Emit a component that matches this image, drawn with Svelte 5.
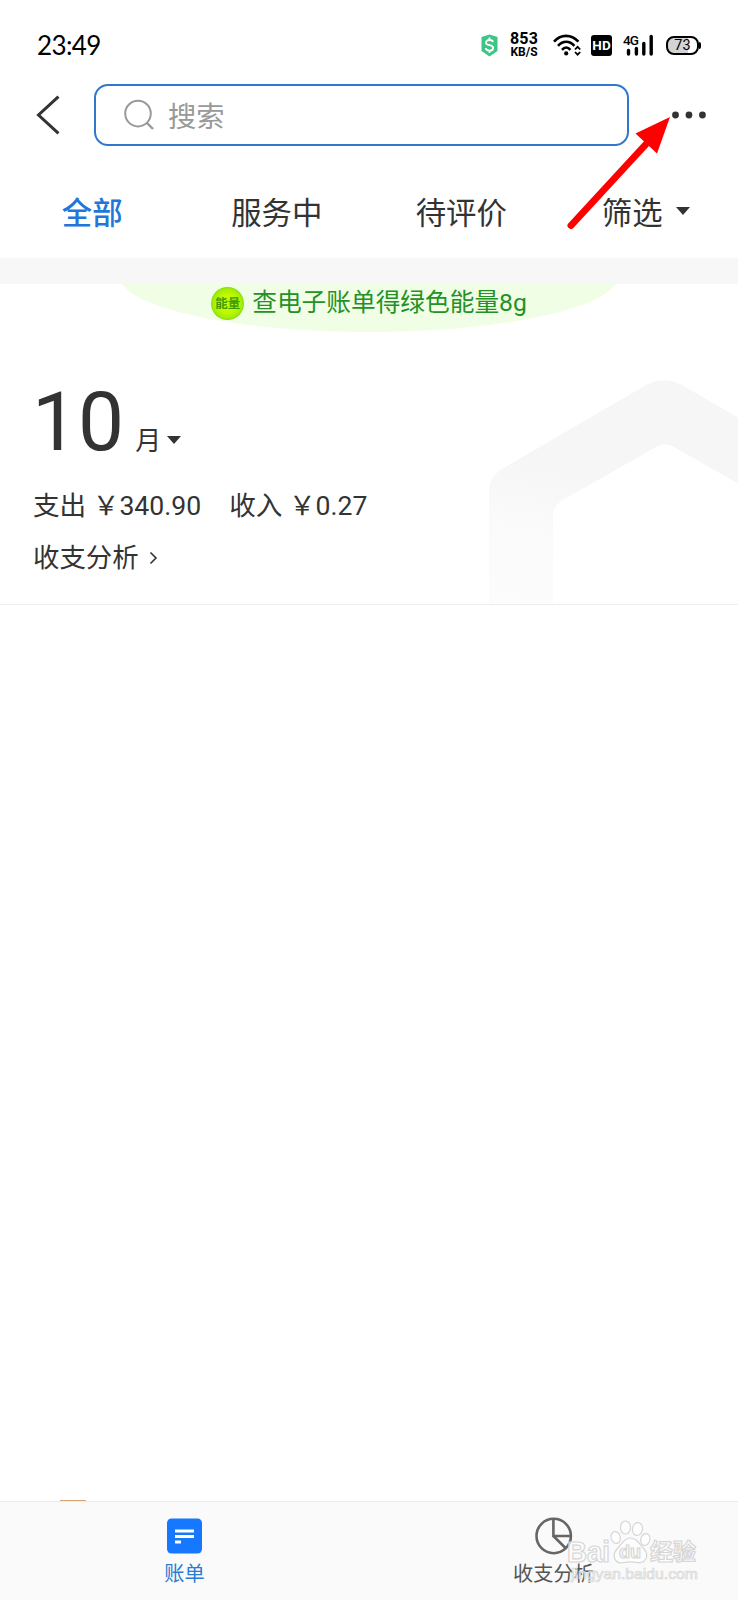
<script>
	let activeTab = 'all';
	let activeNav = 'bill';

	const tabs = [
		{ id: 'all', label: '全部' },
		{ id: 'service', label: '服务中' },
		{ id: 'review', label: '待评价' },
		{ id: 'filter', label: '筛选', dropdown: true }
	];

	const summary = [
		{ label: '支出', amount: '340.90' },
		{ label: '收入', amount: '0.27' }
	];
</script>

<div class="screen">
	<div class="status">
		<span class="time">23:49</span>
		<div class="status-icons">
			<svg class="shield" width="17" height="23" viewBox="0 0 17 23">
				<path d="M8.5 0.5L16.5 3V17L8.5 22.5L0.5 17V3Z" fill="#3cc585" />
				<path d="M12 8C11.6 6.4 10.2 6 8.5 6C6.4 6 5 7 5 8.7C5 12.2 12.2 10.2 12.2 13.9C12.2 15.6 10.7 16.6 8.5 16.6C6.5 16.6 5.1 15.8 4.7 14.1M8.5 3.5V6M8.5 16.5V19" fill="none" stroke="#fff" stroke-width="1.8" />
			</svg>
			<div class="speed">
				<span>853</span>
				<small>KB/S</small>
			</div>
			<svg class="wifi" width="28" height="22" viewBox="0 0 28 22">
				<g fill="none" stroke="#000" stroke-width="2.6">
					<path d="M1 7.6C8 0 18 0 25.4 7.6" />
					<path d="M5 11.8C10 6.4 16.4 6.4 21.4 11.8" />
					<path d="M9 15.8C11.6 12.8 14.8 12.8 17.4 15.8" />
				</g>
				<circle cx="13.2" cy="19.4" r="2.1" />
				<path d="M22 15.5L24.6 12.8L27.2 15.5M22 18L24.6 20.7L27.2 18" fill="none" stroke="#000" stroke-width="1.8" />
			</svg>
			<span class="hd">HD</span>
			<div class="signal">
				<span>4G</span>
				<svg width="31" height="22" viewBox="0 0 31 22">
					<path d="M5.5 16.5V20M13.4 14.5V20M20.8 9.5V20M28.2 2.5V20" stroke="#000" stroke-width="3.4" stroke-linecap="round" />
				</svg>
			</div>
			<div class="battery"><span>73</span></div>
		</div>
	</div>

	<header>
		<svg class="back" width="26" height="40" viewBox="0 0 26 40">
			<path d="M23.5 1.5L3.5 20L23.5 38.5" fill="none" stroke="#333" stroke-width="3" />
		</svg>
		<div class="search">
			<svg width="32" height="32" viewBox="0 0 32 32" fill="none" stroke="#999" stroke-width="2">
				<circle cx="15" cy="14.6" r="12.8" />
				<path d="M24 24L30 30" stroke-width="2.4" />
			</svg>
			<span>搜索</span>
		</div>
		<svg class="more" width="36" height="8" viewBox="0 0 36 8" fill="#333">
			<circle cx="4.5" cy="4" r="3.4" />
			<circle cx="18" cy="4" r="3.4" />
			<circle cx="31.5" cy="4" r="3.4" />
		</svg>
	</header>

	<nav class="tabs">
		{#each tabs as tab}
			<button class:active={activeTab === tab.id} on:click={() => (activeTab = tab.id)}>
				{tab.label}
				{#if tab.dropdown}<i class="caret"></i>{/if}
			</button>
		{/each}
	</nav>

	<section class="month-card">
		<div class="energy">
			<span class="ball">能量</span>
			<span>查电子账单得绿色能量8g</span>
		</div>

		<svg class="hexagon" width="249" height="224" viewBox="0 0 249 224">
			<defs>
				<linearGradient id="hexFade" gradientUnits="userSpaceOnUse" x1="60" y1="85" x2="30" y2="224">
					<stop offset="0" stop-color="#f6f6f6" />
					<stop offset="0.45" stop-color="#fafafa" />
					<stop offset="1" stop-color="#fcfcfc" />
				</linearGradient>
			</defs>
			<path d="M0 224V111Q0 97 13 89L158 4.5Q175 -4 192 4.5L249 37.5V103.5L185 67Q176 61.5 167 67L74 120Q64 125.5 64 136V224Z" fill="url(#hexFade)" />
		</svg>

		<div class="month">
			<span class="number">10</span>
			<span class="unit">月</span>
			<i class="caret"></i>
		</div>
		<div class="totals">
			{#each summary as item}
				<span>{item.label} ￥{item.amount}</span>
			{/each}
		</div>
		<div class="analysis">
			收支分析
			<svg width="9" height="14" viewBox="0 0 9 14">
				<path d="M1.5 1.5L7 7L1.5 12.5" fill="none" stroke="#333" stroke-width="1.6" />
			</svg>
		</div>
	</section>

	<main>
		<span class="peek"></span>
	</main>

	<footer>
		<button class:active={activeNav === 'bill'} on:click={() => (activeNav = 'bill')}>
			<svg width="38" height="38" viewBox="0 0 38 38">
				<rect x="1" y="1.5" width="35" height="35" rx="4.5" fill="#1677ff" />
				<path d="M9 14H28M9 19.5H28M9 25H15" stroke="#fff" stroke-width="3" />
			</svg>
			账单
		</button>
		<button class:active={activeNav === 'analysis'} on:click={() => (activeNav = 'analysis')}>
			<svg width="38" height="38" viewBox="0 0 38 38" fill="none" stroke="#666" stroke-width="2.6">
				<circle cx="18.7" cy="19" r="17.2" />
				<path d="M18.4 2V19H36M18.4 19L30.5 31" />
			</svg>
			收支分析
		</button>
	</footer>

	<svg class="arrow" width="110" height="120" viewBox="0 0 110 120">
		<path d="M11 115.5L88 32" stroke="#f00" stroke-width="7" stroke-linecap="round" />
		<path d="M110 7L75.5 23.5L97 43.5Z" fill="#f00" />
	</svg>

	<svg class="watermark" width="150" height="70" viewBox="0 0 150 70">
		<g fill="#fff" stroke="#d6d6d6" stroke-width="1.2" fill-opacity="0.6">
			<ellipse cx="35.7" cy="26.5" rx="4.6" ry="6" transform="rotate(-15 35.7 26.5)" />
			<ellipse cx="45.5" cy="16.5" rx="5" ry="6.5" />
			<ellipse cx="57.5" cy="18" rx="5" ry="6.5" transform="rotate(10 57.5 18)" />
			<ellipse cx="65.3" cy="28.5" rx="4.6" ry="6" transform="rotate(15 65.3 28.5)" />
			<path d="M50 27C57 27 59 33 64 38C70 45 65 53 57 51.5C52 50.5 49 50.5 44 51.5C35 53.5 31 45 37 38C41 34 44 27 50 27Z" />
			<text class="brand" x="-13" y="51" textLength="43" lengthAdjust="spacingAndGlyphs">Bai</text>
			<text class="paw" x="39" y="47">du</text>
			<text class="exp" x="70" y="49">经验</text>
			<text class="url" x="-9" y="68" textLength="127" lengthAdjust="spacingAndGlyphs">jingyan.baidu.com</text>
		</g>
	</svg>
</div>

<style>
	:global(body) {
		margin: 0;
		background: #fff;
	}

	.screen {
		position: relative;
		display: flex;
		flex-direction: column;
		width: 738px;
		height: 1600px;
		overflow: hidden;
		background: #fff;
		color: #333;
		font-family: Roboto, "Noto Sans CJK SC", sans-serif;
	}

	button {
		border: 0;
		padding: 0;
		background: none;
		color: inherit;
		font-family: inherit;
	}

	.caret {
		border: 7px solid transparent;
		border-top: 8px solid #333;
		border-bottom: 0;
	}

	/* status bar */
	.status {
		display: flex;
		justify-content: space-between;
		align-items: center;
		height: 80px;
		padding: 10px 36px 0 37px;
		box-sizing: border-box;
		color: #000;
	}

	.time {
		font-family: Lato, sans-serif;
		font-size: 26px;
		letter-spacing: -0.6px;
	}

	.status-icons {
		display: flex;
		align-items: center;
	}

	.speed {
		display: flex;
		flex-direction: column;
		align-items: center;
		width: 28px;
		margin: 0 15px 0 12px;
		font-size: 16px;
		font-weight: 700;
		letter-spacing: 0.2px;
		line-height: 14px;
	}

	.speed small {
		font-size: 12px;
		line-height: 12px;
		letter-spacing: 0;
	}

	.hd {
		width: 21px;
		height: 21px;
		margin: 0 11px 0 10px;
		border-radius: 3px;
		background: #000;
		color: #fff;
		font-size: 13.5px;
		font-weight: 700;
		line-height: 21px;
		text-align: center;
	}

	.signal {
		position: relative;
		height: 22px;
	}

	.signal span {
		position: absolute;
		top: -2px;
		left: 0;
		font-size: 13.5px;
		font-weight: 500;
		letter-spacing: -1px;
	}

	.battery {
		position: relative;
		width: 29px;
		height: 15px;
		margin: 0 3px 0 12px;
		border: 2px solid #000;
		border-radius: 8px;
		background: linear-gradient(90deg, #d3d3d3 70%, #fff 70%);
		font-size: 14.5px;
		line-height: 16px;
		text-align: center;
	}

	.battery::after {
		content: "";
		position: absolute;
		top: 4px;
		right: -4px;
		width: 2px;
		height: 7px;
		border-radius: 0 2px 2px 0;
		background: #000;
	}

	/* search header */
	header {
		display: flex;
		align-items: center;
		height: 70px;
		padding: 0 31px 0 35px;
	}

	.search {
		display: flex;
		align-items: center;
		gap: 13px;
		width: 505px;
		height: 58px;
		margin: 0 42px 0 33px;
		padding-left: 27px;
		border: 2px solid #2f78cc;
		border-radius: 14px;
		color: #999;
		font-size: 28.3px;
	}

	.search span {
		margin-top: -2px;
	}

	.tabs {
		display: flex;
		height: 108px;
		padding-top: 14px;
		box-sizing: border-box;
	}

	.tabs button {
		display: flex;
		flex: 1;
		align-items: center;
		justify-content: center;
		gap: 13px;
		font-size: 30.4px;
	}

	.tabs .active {
		color: #2276d9;
		font-weight: 500;
	}

	/* month overview */
	.month-card {
		position: relative;
		height: 320px;
		border-top: 26px solid #f7f7f7;
		border-bottom: 1px solid #eee;
	}

	.energy {
		display: flex;
		align-items: center;
		justify-content: center;
		gap: 8px;
		width: 498px;
		height: 48px;
		margin: 0 auto;
		padding-bottom: 10px;
		box-sizing: border-box;
		clip-path: ellipse(249px 56px at 50% -8px);
		background: #f0fee6;
		color: #259125;
		font-size: 24.7px;
		line-height: 34px;
		white-space: nowrap;
	}

	.ball {
		width: 33px;
		height: 33px;
		border-radius: 50%;
		background: radial-gradient(circle, #c4fa00 35%, #a4ee08 62%, #7fd80d 72%);
		color: #3b9c04;
		font-size: 12.5px;
		font-weight: 700;
		line-height: 33px;
		text-align: center;
	}

	.hexagon {
		position: absolute;
		right: 0;
		bottom: 0;
	}

	.month {
		position: relative;
		display: flex;
		align-items: baseline;
		margin: 42px 0 0 32px;
		line-height: 96px;
	}

	.number {
		font-size: 82px;
	}

	.unit {
		margin: 0 6px 0 11px;
		font-size: 26px;
	}

	.month .caret {
		align-self: center;
		margin-top: 16px;
	}

	.totals {
		display: flex;
		gap: 28px;
		margin: -3px 0 0 33px;
		font-size: 26.6px;
		line-height: 40px;
	}

	.analysis {
		display: flex;
		align-items: center;
		gap: 10px;
		margin: 12px 0 0 33px;
		font-size: 26.4px;
		line-height: 40px;
	}

	main {
		display: flex;
		flex: 1;
		align-items: flex-end;
	}

	.peek {
		width: 26px;
		height: 1px;
		margin-left: 60px;
		background: #d9a577;
	}

	footer {
		display: flex;
		height: 98px;
		border-top: 1px solid #ececec;
		background: #fafafa;
	}

	footer button {
		display: flex;
		flex: 1;
		flex-direction: column;
		align-items: center;
		padding-top: 15px;
		color: #555;
		font-size: 20.2px;
		line-height: 38px;
	}

	footer .active {
		color: #2b7bd3;
	}

	.arrow {
		position: absolute;
		top: 110px;
		left: 560px;
	}

	.watermark {
		position: absolute;
		right: 8px;
		bottom: 19px;
		overflow: visible;
	}

	.brand {
		font: 700 29px "Liberation Sans", sans-serif;
	}

	.paw {
		font: 700 18px "Liberation Sans", sans-serif;
	}

	.exp {
		font: 700 23px "Noto Sans CJK SC", sans-serif;
	}

	.url {
		font: 14px "Liberation Sans", sans-serif;
		stroke-width: 0.7;
	}
</style>
